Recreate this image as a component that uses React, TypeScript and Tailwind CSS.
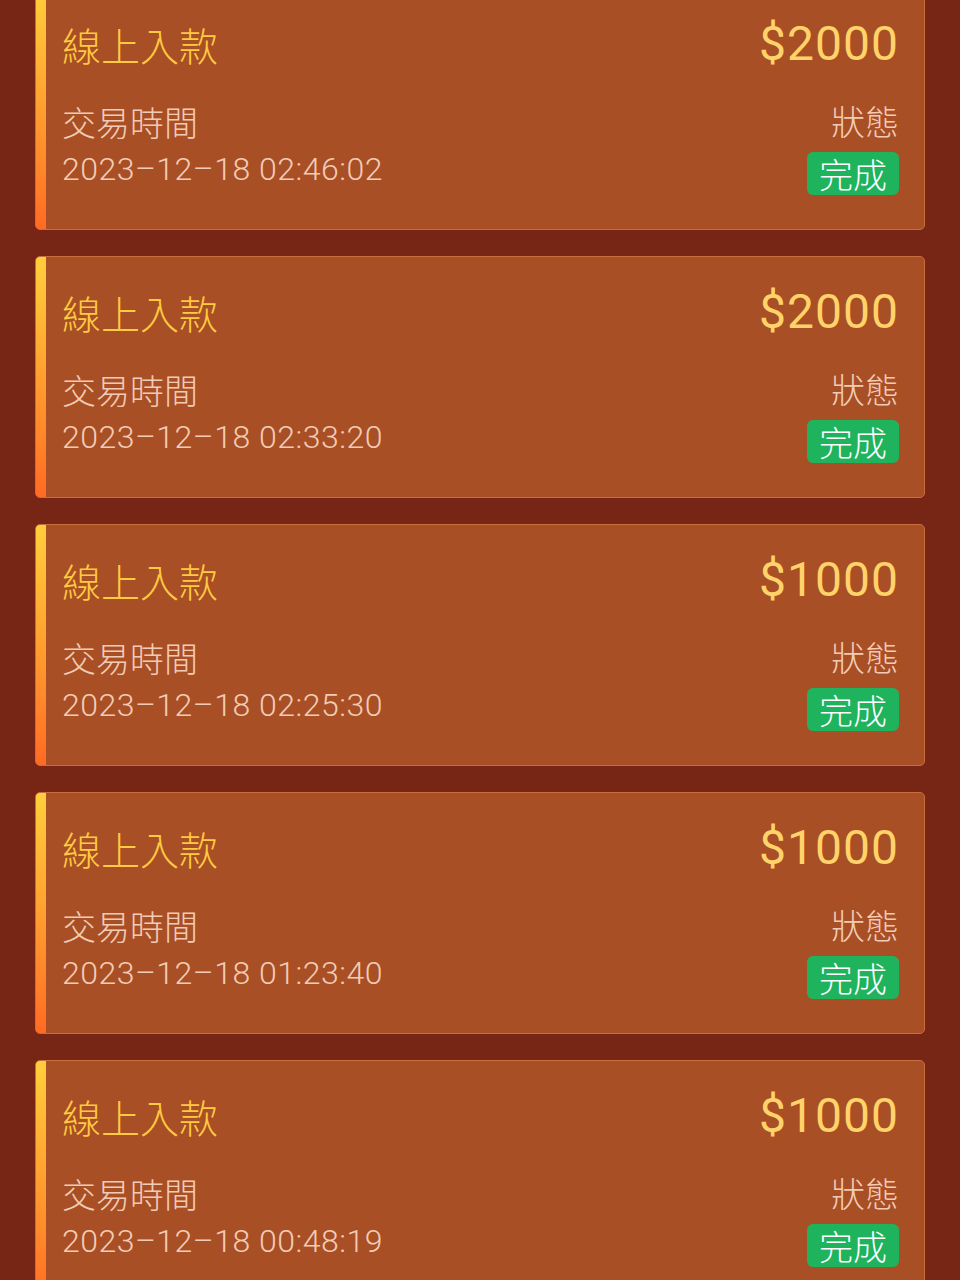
const records = [
  { id: 1, amount: 2000, time: "2023–12–18 02:46:02" },
  { id: 2, amount: 2000, time: "2023–12–18 02:33:20" },
  { id: 3, amount: 1000, time: "2023–12–18 02:25:30" },
  { id: 4, amount: 1000, time: "2023–12–18 01:23:40" },
  { id: 5, amount: 1000, time: "2023–12–18 00:48:19" },
];

const font = { fontFamily: '"Noto Sans CJK TC", "Noto Sans", sans-serif' };
const latin = { fontFamily: 'Roboto, "Noto Sans", sans-serif' };

export default function App() {
  return (
    <div className="min-h-screen w-full bg-[#772615] overflow-hidden" style={font}>
      <div className="-mt-[12px] flex flex-col gap-[26px] px-[35px]">
        {records.map((r) => (
          <div
            key={r.id}
            className="flex h-[242px] rounded-[5px] border border-[#c76d3e] bg-[#a84f26] overflow-hidden"
          >
            {/* accent bar */}
            <div className="w-[10px] shrink-0 bg-gradient-to-b from-[#ffcf3c] to-[#ff6a24]" />
            <div className="flex-1 pl-[16px] pr-[25px] pt-[31px]">
              <div className="flex h-[48px] items-center justify-between">
                <span className="text-[39px] font-light leading-[48px] text-[#ffc940]">線上入款</span>
                <span className="text-[48px] leading-[48px] tracking-[1px] text-[#ffd26a]" style={latin}>
                  ${r.amount}
                </span>
              </div>
              <div className="mt-[33px] flex items-start justify-between">
                <div className="flex flex-col">
                  <span className="text-[34px] font-light leading-[42px] text-[#f3cbb5]">交易時間</span>
                  <span
                    className="mt-[6px] text-[32px] font-light leading-[40px] tracking-[0.5px] text-[#f3cbb5]"
                    style={latin}
                  >
                    {r.time}
                  </span>
                </div>
                <div className="flex flex-col items-end">
                  <span className="text-[34px] font-light leading-[40px] text-[#f3cbb5]">狀態</span>
                  <span className="mt-[11px] flex h-[43px] items-center rounded-[6px] bg-[#1eb35c] px-[12px] text-[34px] font-light leading-[43px] text-white">
                    完成
                  </span>
                </div>
              </div>
            </div>
          </div>
        ))}
      </div>
    </div>
  );
}
